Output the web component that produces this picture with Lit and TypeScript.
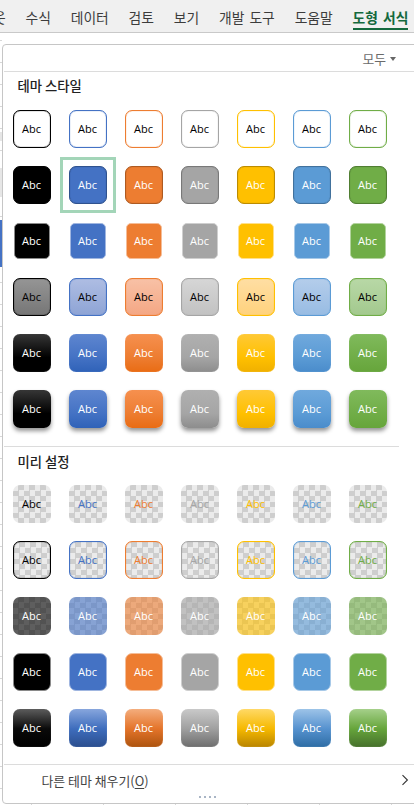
import { LitElement, html, css } from "lit";
import { customElement } from "lit/decorators.js";

interface Hue {
  base: string; dk: string; ring: string; t1: string; t2: string;
  g1: string; g2: string; s1: string; s2: string; s3: string; glow: string;
}

const HUES: Hue[] = [
  { base: "#000000", dk: "#000000", ring: "#8a8a8a", t1: "#959595", t2: "#767676", g1: "#363636", g2: "#000000", s1: "#5c5c5c", s2: "#0a0a0a", s3: "#000000", glow: "#6a6a6a" },
  { base: "#4472c4", dk: "#2f528f", ring: "#a0b6e0", t1: "#aebde3", t2: "#8ea4d5", g1: "#5e86d0", g2: "#2f62b8", s1: "#87a6dd", s2: "#3e6dbd", s3: "#2b4e8e", glow: "#8fabdf" },
  { base: "#ed7d31", dk: "#ae5a21", ring: "#f5bd98", t1: "#f8c1a6", t2: "#f4a784", g1: "#f6904f", g2: "#e96c14", s1: "#f4ad7d", s2: "#e4742a", s3: "#ad540f", glow: "#f5b690" },
  { base: "#a5a5a5", dk: "#787878", ring: "#cfcfcf", t1: "#d6d6d6", t2: "#c2c2c2", g1: "#b0b0b0", g2: "#8d8d8d", s1: "#c9c9c9", s2: "#a0a0a0", s3: "#6e6e6e", glow: "#cccccc" },
  { base: "#ffc000", dk: "#bc8c00", ring: "#ffe08a", t1: "#ffdea3", t2: "#ffd27d", g1: "#ffc936", g2: "#f0b000", s1: "#ffd966", s2: "#f6b900", s3: "#b98500", glow: "#ffdf85" },
  { base: "#5b9bd5", dk: "#41719c", ring: "#a7c9e8", t1: "#b4cdeb", t2: "#98bce3", g1: "#70a9dd", g2: "#4a8ccb", s1: "#9dc3e8", s2: "#5692cf", s3: "#2e6da5", glow: "#a3c6e9" },
  { base: "#70ad47", dk: "#507e32", ring: "#b3d39e", t1: "#b8d8a6", t2: "#a3c98e", g1: "#80ba5c", g2: "#66a53b", s1: "#a5d08a", s2: "#66a53b", s3: "#46702c", glow: "#aed29a" },
];

const vars = (h: Hue) =>
  `--base:${h.base};--dk:${h.dk};--ring:${h.ring};--t1:${h.t1};--t2:${h.t2};--g1:${h.g1};--g2:${h.g2};--s1:${h.s1};--s2:${h.s2};--s3:${h.s3};--glow:${h.glow};--veil:${h.base}99`;

const THEME = ["outline", "solid", "ringed", "tint", "grad", "shadow"];
const PRESET = ["clear", "clearline", "veil", "flat", "gloss"];
const TABS = ["수식", "데이터", "검토", "보기", "개발 도구", "도움말"];

@customElement("app-root")
export class AppRoot extends LitElement {
  static styles = css`
    :host {
      display: flex;
      flex-direction: column;
      width: 414px;
      height: 805px;
      overflow: hidden;
      font-family: "Noto Sans CJK KR", "Noto Sans", sans-serif;
      background: #fff;
    }
    .ribbon {
      display: flex;
      flex: none;
      height: 33px;
      box-sizing: border-box;
      background: #f0f0f0;
      border-bottom: 1px solid #c9c9c9;
      gap: 19.8px;
      color: #3c3c3c;
      font-size: 13.8px;
      word-spacing: 2px;
      white-space: nowrap;
      overflow: hidden;
    }
    .tab { height: 32px; line-height: 34px; flex: none; }
    .tab.lead { margin-left: -7px; }
    .tab.on {
      color: #14693d;
      font-weight: 700;
      box-sizing: border-box;
      border-bottom: 2.5px solid #14693d;
      height: 30px;
      line-height: 34px;
    }
    .sheet {
      flex: 1;
      min-height: 0;
      box-sizing: border-box;
      padding: 11px 0 1px 2px;
      background-color: #fff;
      background-image:
        linear-gradient(to bottom,
          transparent 99px, #e6e6e6 99px, #e6e6e6 108px, transparent 108px,
          transparent 135px, #e6e6e6 135px, #e6e6e6 164px, transparent 164px,
          transparent 187px, #4472c4 187px, #4472c4 234px, transparent 234px),
        repeating-linear-gradient(to bottom, transparent 0 7px, #d8d8d8 7px 8px, transparent 8px 22px),
        repeating-linear-gradient(to right, transparent 0 31px, #d8d8d8 31px 32px, transparent 32px 72px);
      background-size: 2px 100%, 2px 100%, 100% 2px;
      background-position: 0 0, 0 0, 0 100%;
      background-repeat: no-repeat;
    }
    .panel {
      width: 420px;
      height: 100%;
      box-sizing: border-box;
      display: flex;
      flex-direction: column;
      background: #fff;
      border: 1.5px solid #c6c6c6;
      border-radius: 4px;
    }
    .filter {
      flex: none;
      height: 26px;
      box-sizing: border-box;
      width: 393px;
      display: flex;
      justify-content: flex-end;
      align-items: center;
      gap: 4px;
      color: #6a6a6a;
      font-size: 12.8px;
    }
    .caret {
      width: 0;
      height: 0;
      border-left: 3.5px solid transparent;
      border-right: 3.5px solid transparent;
      border-top: 4px solid #666;
      margin-top: 1px;
    }
    .rule { flex: none; height: 1px; background: #dcdcdc; width: 394.5px; margin-left: 1px; }
    .rule.full { width: 418px; }
    .head {
      flex: none;
      height: 29px;
      padding-left: 14.5px;
      box-sizing: border-box;
      font-size: 13.3px;
      font-weight: 500;
      line-height: 29px;
      color: #222;
    }
    .head.top { line-height: 27px; }
    .grid {
      flex: none;
      display: grid;
      grid-template-columns: repeat(7, 56px);
      grid-auto-rows: 56px;
      margin-left: .5px;
    }
    .cell {
      display: flex;
      align-items: center;
      justify-content: center;
      box-sizing: border-box;
    }
    .cell.sel { border: 3.5px solid #a3d5b8; }
    .sw {
      width: 38px;
      height: 38px;
      box-sizing: border-box;
      flex: none;
      display: flex;
      align-items: center;
      justify-content: center;
      border-radius: 7px;
      font-family: "Open Sans", "Noto Sans", sans-serif;
      font-size: 11px;
      line-height: 1;
      padding-bottom: 2px;
      color: #fff;
    }
    .outline { background: #fff; border: 1px solid var(--base); box-shadow: inset 0 0 1px var(--base); color: #000; }
    .solid { background: var(--base); border: 1px solid var(--dk); box-shadow: inset 0 0 1px var(--dk); }
    .ringed {
      width: 36px;
      height: 36px;
      border-radius: 5px;
      background: var(--base);
      border: 1px solid var(--ring);
    }
    .tint {
      background: linear-gradient(var(--t1), var(--t2));
      border: 1px solid var(--base);
      box-shadow: inset 0 0 1px var(--base);
      color: #000;
    }
    .grad { background: linear-gradient(var(--g1), var(--base) 62%, var(--g2)); box-shadow: inset 0 0 1px var(--glow); }
    .shadow {
      background: linear-gradient(var(--g1), var(--base) 62%, var(--g2));
      box-shadow: 0 3px 4px rgba(0, 0, 0, .42);
    }
    .clear, .clearline, .veil {
      background-image: repeating-conic-gradient(#cecece 0 25%, #ebebeb 0 50%);
      background-size: 11px 11px;
      color: var(--base);
    }
    .clearline { border: 1px solid var(--base); box-shadow: inset 0 0 1px var(--base); }
    .veil {
      background-image:
        linear-gradient(var(--veil), var(--veil)),
        repeating-conic-gradient(#cecece 0 25%, #ebebeb 0 50%);
      background-size: auto, 11px 11px;
      color: #fff;
    }
    .flat { background: var(--base); border: 1px solid var(--ring); }
    .gloss {
      background: linear-gradient(var(--s1), var(--s2) 52%, var(--s3));
      box-shadow: inset 0 0 1px var(--glow);
    }
    .more {
      flex: none;
      height: 36px;
      width: 413px;
      box-sizing: border-box;
      padding: 0 7px 5px 38.5px;
      display: flex;
      align-items: center;
      justify-content: space-between;
      color: #444;
      font-size: 12.9px;
      position: relative;
    }
    .more u { text-underline-offset: 2px; }
    .more svg { display: block; margin-bottom: 2px; }
    .grip {
      position: absolute;
      left: 196px;
      bottom: 3.5px;
      display: flex;
      gap: 3px;
    }
    .grip i { width: 2px; height: 2px; background: #a9b5c5; display: block; }
    .spacer { flex: none; height: 9px; }
    .spacer.s2 { height: 8px; }
  `;

  private row(names: string[], selected = -1) {
    return names.flatMap((name, r) =>
      HUES.map((h, c) => html`
        <div class="cell ${selected === r * 7 + c ? "sel" : ""}" style=${vars(h)}>
          <div class="sw ${name}">Abc</div>
        </div>`));
  }

  render() {
    return html`
      <div class="ribbon">
        <span class="tab lead">웃</span>
        ${TABS.map((t) => html`<span class="tab">${t}</span>`)}
        <span class="tab on">도형 서식</span>
      </div>
      <div class="sheet">
        <div class="panel">
          <div class="filter"><span>모두</span><span class="caret"></span></div>
          <div class="rule full"></div>
          <div class="head top">테마 스타일</div>
          <div class="grid">${this.row(THEME, 8)}</div>
          <div class="spacer"></div>
          <div class="rule"></div>
          <div class="head">미리 설정</div>
          <div class="grid">${this.row(PRESET)}</div>
          <div class="spacer s2"></div>
          <div class="rule full"></div>
          <div class="more">
            <span>다른 테마 채우기(<u>O</u>)</span>
            <svg width="8" height="12" viewBox="0 0 8 12" fill="none" stroke="#333" stroke-width="1.1"><path d="M1.5 1.2 L6.4 6 L1.5 10.8"/></svg>
            <div class="grip"><i></i><i></i><i></i><i></i></div>
          </div>
        </div>
      </div>
    `;
  }
}
